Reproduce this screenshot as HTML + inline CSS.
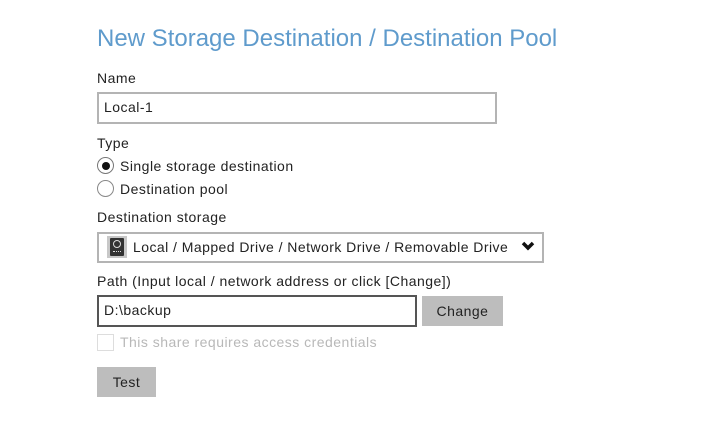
<!DOCTYPE html>
<html><head><style>
body{margin:0;width:720px;height:430px;background:#fff;font-family:"Liberation Sans",sans-serif;color:#222;position:relative;overflow:hidden}
.a{position:absolute;white-space:nowrap}
.l{font-size:14px;line-height:16px;letter-spacing:0.48px}
</style></head><body>
<div class="a" style="left:97px;top:24px;font-size:24px;color:#5f9bcc;line-height:30px;letter-spacing:0px">New Storage Destination / Destination Pool</div>
<div class="a l" style="left:97px;top:70px">Name</div>
<div class="a" style="left:97px;top:92px;width:396px;height:28px;border:2px solid #b4b4b4"></div>
<div class="a l" style="left:104px;top:99px">Local-1</div>
<div class="a l" style="left:97px;top:135px">Type</div>
<div class="a" style="left:97px;top:157px;width:15px;height:15px;border:1.5px solid #777;border-radius:50%"></div>
<div class="a" style="left:102px;top:162px;width:8px;height:8px;background:#111;border-radius:50%"></div>
<div class="a l" style="left:120px;top:158px">Single storage destination</div>
<div class="a" style="left:97px;top:180px;width:15px;height:15px;border:1.5px solid #888;border-radius:50%"></div>
<div class="a l" style="left:120px;top:181px">Destination pool</div>
<div class="a l" style="left:97px;top:209px">Destination storage</div>
<div class="a" style="left:97px;top:232px;width:443px;height:27px;border:2px solid #b4b4b4"></div>
<div class="a" style="left:107px;top:236px;width:20px;height:22px;background:#c8c8c8"></div>
<div class="a" style="left:110px;top:238px;width:14px;height:18px;background:#333;border-radius:1px"></div>
<div class="a" style="left:113px;top:240px;width:6px;height:6px;border:1px solid #ddd;border-radius:50%"></div>
<div class="a" style="left:113px;top:251px;width:8px;height:2px;border-top:1px dotted #ddd"></div>
<div class="a l" style="left:133px;top:239px;letter-spacing:0.45px">Local / Mapped Drive / Network Drive / Removable Drive</div>
<svg class="a" style="left:521px;top:241px" width="14" height="10" viewBox="0 0 14 10"><path d="M2 2 L7 7 L12 2" stroke="#111" stroke-width="3.5" fill="none"/></svg>
<div class="a l" style="left:97px;top:273px">Path (Input local / network address or click [Change])</div>
<div class="a" style="left:97px;top:295px;width:316px;height:28px;border:2px solid #555"></div>
<div class="a l" style="left:104px;top:302px">D:\backup</div>
<div class="a l" style="left:422px;top:296px;width:81px;height:30px;line-height:30px;background:#bdbdbd;text-align:center">Change</div>
<div class="a" style="left:97px;top:334px;width:15px;height:15px;border:1px solid #ddd"></div>
<div class="a l" style="left:120px;top:334px;color:#b8b8b8">This share requires access credentials</div>
<div class="a l" style="left:97px;top:367px;width:59px;height:30px;line-height:30px;background:#bdbdbd;text-align:center">Test</div>
</body></html>
